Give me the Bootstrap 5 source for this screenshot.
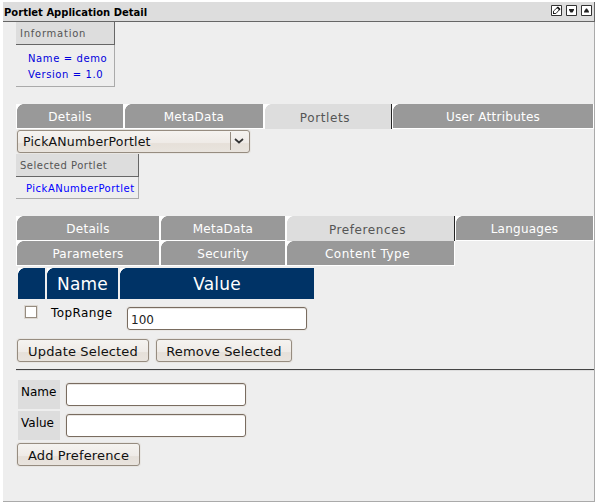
<!DOCTYPE html>
<html lang="en">
<head>
<meta charset="utf-8">
<title>Portlet Application Detail</title>
<link href="https://cdn.jsdelivr.net/npm/bootstrap@5.3.0/dist/css/bootstrap.min.css" rel="stylesheet">
<style>
body{font-family:"DejaVu Sans",Verdana,sans-serif;font-size:12px;line-height:15px;color:#000;background:#fff;overflow:hidden}
.window{width:592px;height:500px;margin:2px 0 0 3px;background:#eee;border-right:1px solid #aaa;border-bottom:1px solid #aaa}
.titlebar{height:20px;margin-right:-1px;background:#ddd;border-bottom:1px solid #666;border-right:1px solid #666;font-size:10px;padding:1px 2px 0 1px}
.title-text{padding-top:5px}
.window-icons{gap:4px;margin-top:2px}
.window-icons svg{width:11px;height:11px;display:block}
.window-body{padding-left:13px}
.info-box{border-right:1px solid #aaa;border-bottom:1px solid #aaa;font-size:10px;color:#00d}
.info-head{height:23px;margin-right:-1px;padding:4px 0 0 4px;background:#ddd;border-right:1px solid #666;border-bottom:1px solid #666;color:#555}
.app-info{width:99px;height:65px}
.app-info .info-head{letter-spacing:.75px}
.app-info .info-lines{padding:6px 0 0 12px;line-height:16px;letter-spacing:.6px}
.portlet-info{width:123px;height:45px;margin-top:1px;color:#00f}
.portlet-info .info-head{letter-spacing:.5px}
.portlet-info .info-lines{padding:4px 0 0 10px;letter-spacing:.5px}
.tab-grid{display:grid;width:578px;grid-auto-rows:25px}
.tabs-app{grid-template-columns:108px 140px 128px 202px;margin-top:17px}
.tabs-portlet{grid-template-columns:144px 126px 169px 139px;margin-top:17px}
.tab-item,.head-cell{--fill:#999;color:#fff;text-align:center;text-decoration:none;background:radial-gradient(circle at 7px 7px,var(--fill) 6.6px,#fff 7.2px) 0 0/7px 7px no-repeat,var(--fill)}
.tab-item{border:1px solid #fff;border-top:0;letter-spacing:.25px;padding-top:6px}
.tab-item.current{--fill:#ddd;color:#555;border-right-color:#222;border-bottom:0;padding:7px 6px 0 0;letter-spacing:.6px}
.tab-item.short{padding-right:6px;letter-spacing:.5px}
.bevel{height:23px;border:1px solid #968c80;border-radius:3px;background:linear-gradient(#f5f3f0,#efebe7 55%,#e6e0d9 60%,#e9e4de);box-shadow:0 0 0 1px #e8e6e3;color:#111;font-size:13px;line-height:21px;letter-spacing:.15px;padding:1px 0 0;text-align:center}
.picker{width:233px;margin:1px 0 0 1px;padding:0 0 0 5px;text-align:left;font-size:12.5px;letter-spacing:.18px}
.picker .arrow{width:19px;height:18px;margin-top:1px;border-left:1px solid #968c80}
.head-row{gap:2px;margin:2px 0 0 2px}
.head-cell{--fill:#036;height:31px;font-size:17px;line-height:33px;letter-spacing:.2px}
.w-check{width:27px}.w-name{width:71px}.w-value{width:194px}
.pref-row{height:40px}
.pref-check{width:12px;height:12px;margin:7px 0 0 9px;appearance:none;background:#fff;border:1px solid #968c80;box-shadow:0 0 0 1px #ddd8d2}
.field{width:180px;height:23px;background:#fff;border:1px solid #796c60;border-radius:3px;box-shadow:inset 0 1px #e8e5e2,0 0 0 1px #e8e6e3;font-size:12px;color:#222;padding:2px 3px 0;outline:0}
.rule{width:578px;height:2px;margin-top:7px;background:#ddd;border-top:1px solid #444}
.form-line{height:29px;margin:0 0 2px 2px}
.field-label{width:42px;background:#ddd;padding:5px 0 0 3px}
.pref-name{width:76px;margin:7px 0 0 14px;letter-spacing:.4px}
.pref-value{margin-top:8px}
.button-row{gap:7px;margin-left:1px}
.btn-update{width:132px}
.btn-remove{width:136px}
.btn-add{display:block;width:123px;margin:3px 0 0 1px}
.new-pref{padding-top:9px}
.form-line .field{margin:3px 0 0 6px}
</style>
<script src="https://cdn.jsdelivr.net/npm/bootstrap@5.3.0/dist/js/bootstrap.bundle.min.js"></script>
</head>
<body>
<main class="window">
  <header class="titlebar d-flex justify-content-between fw-bold">
    <span class="lh-1 text-nowrap title-text">Portlet Application Detail</span>
    <div class="d-flex window-icons">
      <svg viewBox="0 0 11 11"><path d="M.5.5h10v10H.5z" fill="#fff" stroke="#333"/><path d="M2.5 8.5V6L6.500 2.500 8.500 4.500 5 8.500z" fill="#fff" stroke="#333"/><path d="M5.500 2.500 7 1.500 9.500 4 8.500 5.500zM2 7l2 2H2z" fill="#111"/></svg>
      <svg viewBox="0 0 11 11"><path d="M.5.5h10v10H.5z" fill="#fff" stroke="#333"/><path d="M3 4h5v1L6.500 7.500h-2L3 5z" fill="#222"/></svg>
      <svg viewBox="0 0 11 11"><path d="M.5.5h10v10H.5z" fill="#fff" stroke="#333"/><path d="M3 7.500h5v-1L6 3.500H5L3 6.500z" fill="#222"/></svg>
    </div>
  </header>
  <div class="window-body">
    <section class="info-box app-info">
      <div class="info-head">Information</div>
      <div class="info-lines">Name = demo<br>Version = 1.0</div>
    </section>
    <nav class="tab-grid tabs-app">
      <a class="tab-item">Details</a><a class="tab-item">MetaData</a><a class="tab-item current">Portlets</a><a class="tab-item">User Attributes</a>
    </nav>
    <div class="bevel picker d-flex justify-content-between" role="combobox">
      <span>PickANumberPortlet</span>
      <span class="arrow"><svg class="d-block" width="18" height="18"><path d="M4 7 8 10.500 12 7" fill="none" stroke="#333" stroke-width="1.700"/></svg></span>
    </div>
    <section class="info-box portlet-info">
      <div class="info-head">Selected Portlet</div>
      <div class="info-lines">PickANumberPortlet</div>
    </section>
    <nav class="tab-grid tabs-portlet">
      <a class="tab-item">Details</a><a class="tab-item">MetaData</a><a class="tab-item current">Preferences</a><a class="tab-item">Languages</a>
      <a class="tab-item">Parameters</a><a class="tab-item">Security</a><a class="tab-item short">Content Type</a>
    </nav>
    <div class="d-flex head-row">
      <div class="head-cell w-check"></div><div class="head-cell w-name">Name</div><div class="head-cell w-value">Value</div>
    </div>
    <div class="d-flex pref-row">
      <input type="checkbox" class="pref-check" aria-label="Select TopRange">
      <span class="pref-name">TopRange</span>
      <input class="field pref-value" value="100" aria-label="TopRange value">
    </div>
    <div class="d-flex button-row">
      <button class="bevel btn-update">Update Selected</button>
      <button class="bevel btn-remove">Remove Selected</button>
    </div>
    <div class="rule"></div>
    <div class="new-pref">
      <div class="d-flex form-line"><label class="field-label" for="n">Name</label><input class="field" id="n"></div>
      <div class="d-flex form-line"><label class="field-label" for="v">Value</label><input class="field" id="v"></div>
    </div>
    <button class="bevel btn-add">Add Preference</button>
  </div>
</main>
</body>
</html>
